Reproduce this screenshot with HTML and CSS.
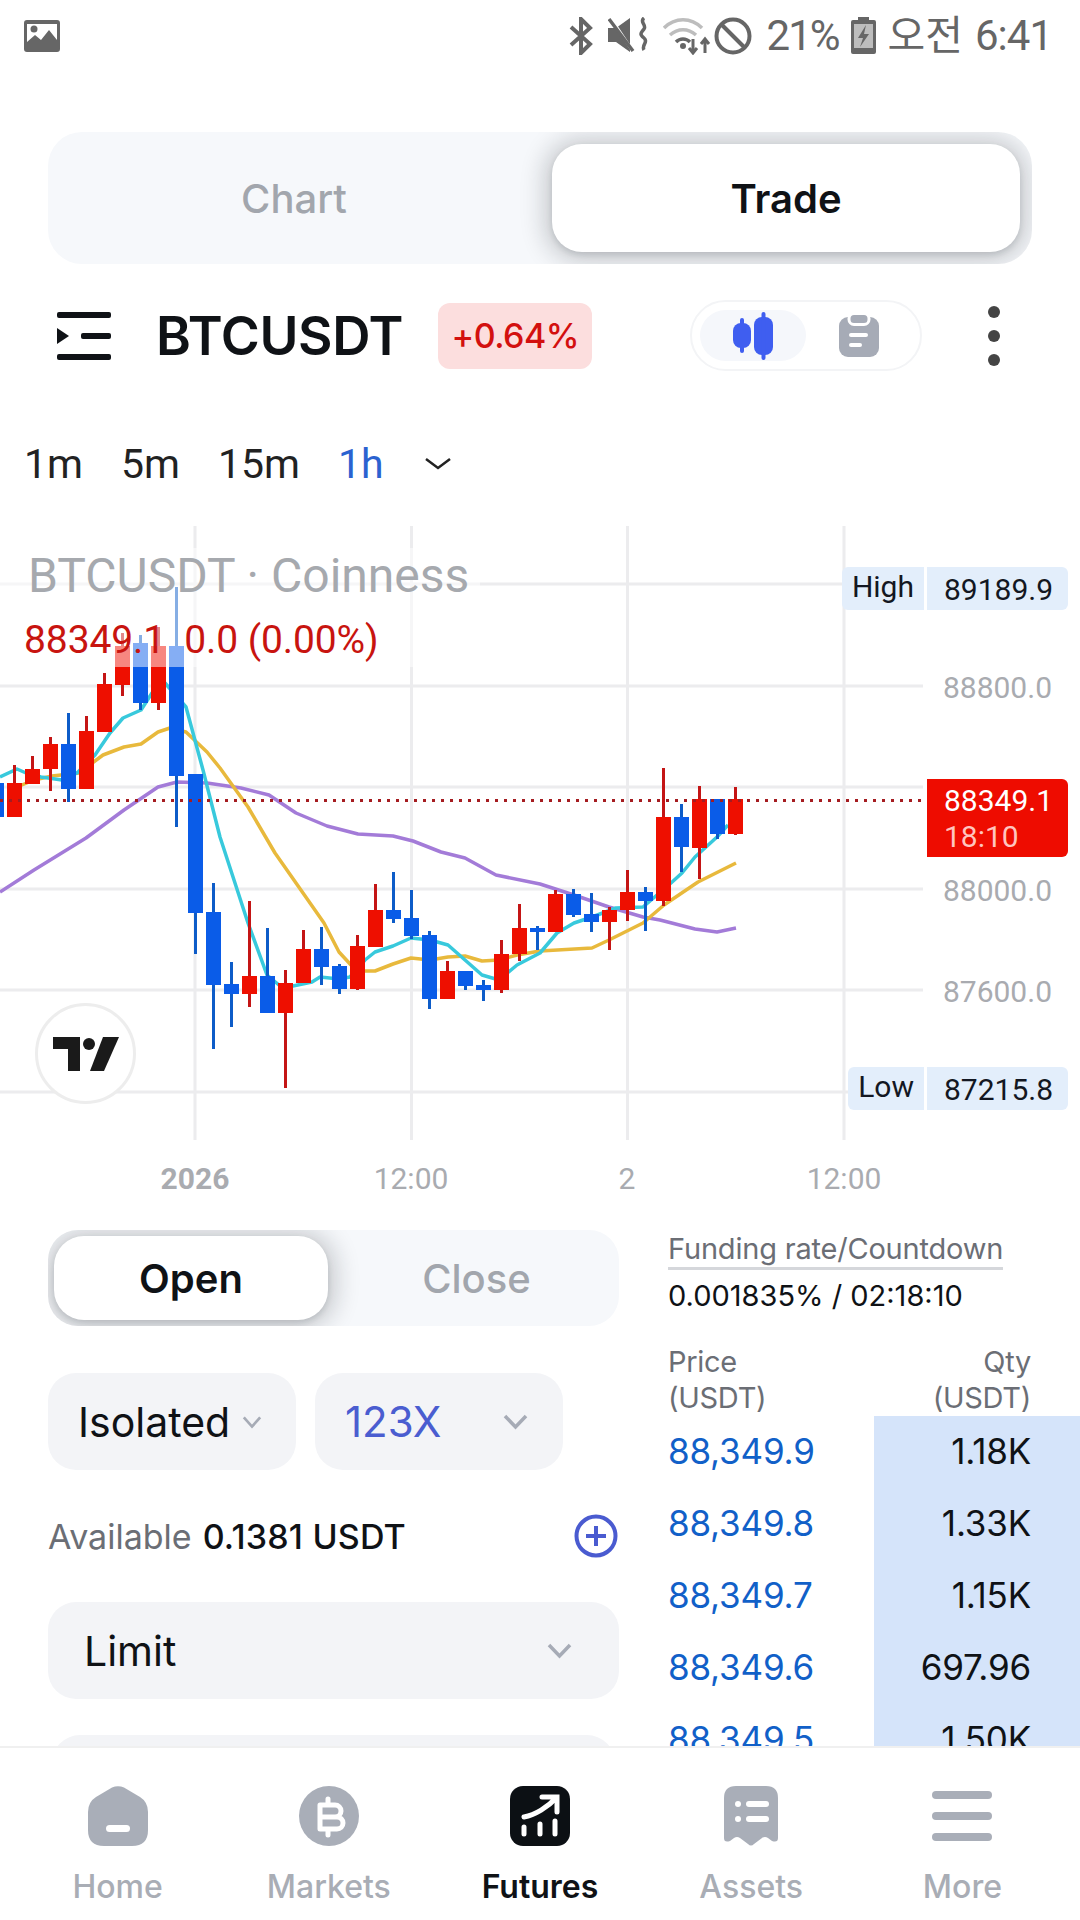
FILE: index.html
```html
<!DOCTYPE html>
<html>
	<head>
		<meta charset="utf-8">
		<title>BTCUSDT</title>
		<link rel="stylesheet" href="styles.css">
	</head>

	<body>
		<div class="page">
			<div class="status">
				<svg class="status-pic" width="36" height="32" viewBox="0 0 36 32">
					<path fill="#666" fill-rule="evenodd" d="M3 0h30a3 3 0 0 1 3 3v26a3 3 0 0 1-3 3H3a3 3 0 0 1-3-3V3a3 3 0 0 1 3-3zM3 4v18l8-7 6 5 8-10 8 10V4z"/>
					<circle cx="10" cy="9" r="3.5" fill="#666"/>
				</svg>
				<div class="status-right">
					<svg width="24" height="38" viewBox="0 0 24 38" fill="none" stroke="#666" stroke-width="4"><path d="M2 10l19 17-9 9V2l9 9L2 28"/></svg>
					<svg class="ml-mute" width="40" height="36" viewBox="0 0 40 36">
						<path fill="#666" d="M0 11h8l14-10v34L8 25H0z"/>
						<path stroke="#fff" stroke-width="3" d="M2 0l24 36"/>
						<path stroke="#666" stroke-width="3.5" d="M1 2l24 32" />
						<path fill="none" stroke="#666" stroke-width="3.5" d="M36 1c-5 4 3 7 0 11s-5 5 0 9-3 7 0 12"/>
					</svg>
					<svg class="ml-wifi" width="48" height="38" viewBox="0 0 48 38" fill="none">
						<path stroke="#bdbdbd" stroke-width="3.5" d="M1 11c11-11 27-11 38 0"/>
						<path stroke="#bdbdbd" stroke-width="3.5" d="M7 18c8-7 18-7 26 0"/>
						<path stroke="#666" stroke-width="3.5" d="M13 25c4-4 10-4 14 0"/>
						<circle cx="20" cy="29" r="3" fill="#666"/>
						<path stroke="#666" stroke-width="3" d="M30 22v14M26 31l4 5 4-5M42 36V22M38 27l4-5 4 5"/>
					</svg>
					<svg class="ml-block" width="38" height="38" viewBox="0 0 38 38" fill="none" stroke="#666" stroke-width="4"><circle cx="19" cy="19" r="16.5"/><path d="M7 7l24 24"/></svg>
					<span class="status-text ml-pct">21%</span>
					<svg class="ml-batt" width="25" height="37" viewBox="0 0 25 37">
						<path fill="#666" d="M7 0h11v3h5a2 2 0 0 1 2 2v30a2 2 0 0 1-2 2H2a2 2 0 0 1-2-2V5a2 2 0 0 1 2-2h5z"/>
						<rect x="3" y="7" width="19" height="24" fill="#bdbdbd"/>
						<path fill="#666" d="M15 8l-8 13h5l-3 9 9-13h-5z"/>
					</svg>
					<span class="status-text status-ko">오전</span>
					<span class="status-text ml-time">6:41</span>
				</div>
			</div>

			<div class="tabs tabs-main">
				<div class="tab tab-big">Chart</div>
				<div class="tab tab-big on">Trade</div>
			</div>

			<div class="symbol-row">
				<svg class="menu-icon" width="54" height="48" viewBox="0 0 54 48" fill="#0f1216">
					<rect width="54" height="6" rx="2"/>
					<rect x="24" y="21" width="30" height="6" rx="2"/>
					<rect y="42" width="54" height="6" rx="2"/>
					<path d="M0 16l12 8-12 8z"/>
				</svg>
				<div class="symbol">BTCUSDT</div>
				<div class="change">+0.64%</div>
				<div class="view-switch">
					<div class="view-btn on">
						<svg width="42" height="48" viewBox="0 0 42 48" fill="#3f5ef0">
							<rect x="1" y="11" width="18" height="25" rx="8"/>
							<rect x="8" y="6" width="4" height="35" rx="2"/>
							<rect x="22" y="5" width="19" height="38" rx="8"/>
							<rect x="29.500" y="0" width="4" height="48" rx="2"/>
						</svg>
					</div>
					<div class="view-btn">
						<svg width="40" height="48" viewBox="0 0 40 48">
							<rect y="5" width="40" height="40" rx="9" fill="#a6abb6"/>
							<rect x="10" y="1.500" width="20" height="11" rx="5" fill="#a6abb6" stroke="#fff" stroke-width="3"/>
							<rect x="10" y="21" width="19" height="4" rx="2" fill="#fff"/>
							<rect x="10" y="31" width="13" height="4" rx="2" fill="#fff"/>
						</svg>
					</div>
				</div>
				<div class="more-dots"><i></i><i></i><i></i></div>
			</div>

			<div class="frames">
				<span>1m</span>
				<span>5m</span>
				<span>15m</span>
				<span class="on">1h</span>
				<svg width="28" height="14" viewBox="0 0 28 14" fill="none" stroke="#222" stroke-width="2.500"><path d="M2 2l12 9 12-9"/></svg>
			</div>

			<div class="chart">
				<svg class="chart-svg" width="1080" height="680" viewBox="0 520 1080 680">
					<!-- grid -->
					<path fill="none" stroke="#ececee" stroke-width="3" d="M0 584H923M0 686H923M0 787H923M0 889H923M0 990H923M0 1092H923M195 526V1140M411.500 526V1140M627.500 526V1140M844 526V1140"/>

					<!-- averages -->
					<g fill="none" stroke-width="3.500" stroke-linejoin="round">
						<polyline stroke="#a37bd8" points="0,892 34,870 86,838 124,810 158,787 177,782 207,783 241,788 269,795 296,813 327,826 358,834 393,836 413,841 441,852 465,858 496,875 540,884 574,895 609,907 643,917 660,920 695,929 717,932 736,928"/>
						<polyline stroke="#e8b93c" points="17,787 34,780 52,776 79,773 103,755 124,747 141,744 158,732 170,728 186,732 207,752 220,768 248,807 275,853 296,883 324,923 339,952 351,965 365,971 375,971 393,964 411,958 430,960 448,957 465,956 482,961 499,960 517,955 540,951 592,948 609,940 643,923 664,905 698,882 736,863"/>
						<polyline stroke="#38c9dc" points="0,777 17,769 26,773 41,777 62,780 77,773 95,755 110,733 123,718 141,710 152,693 165,683 186,707 203,770 220,837 248,923 267,975 279,985 293,986 312,982 320,977 339,979 350,977 365,960 375,952 393,946 411,938 430,940 448,945 465,960 482,975 499,980 517,965 540,953 557,933 574,923 592,917 616,908 643,907 671,883 682,873 695,857 717,837 728,825"/>
					</g>

					<!-- candles -->
					<g fill="none" shape-rendering="crispEdges">
						<path stroke="#c41515" stroke-width="3" d="M14.500 765V817M32.500 756V784M50.500 737V791M86.500 716V731M104.500 673V684M122.500 633V696M158.500 627V710M249.500 901V1007M285.500 970V1088M303.500 930V949M357.500 935V990M375.500 884V910M447.500 961V971M501.500 940V993M519.500 904V961M555.500 890V894M609.500 907V950M627.500 870V921M663.500 768V906M699.500 786V879M735.500 787V835"/>
						<path stroke="#0d5cc8" stroke-width="3" d="M68.500 713V802M140.500 635V710M176.500 587V827M195.500 774V954M213.500 883V1049M231.500 962V1027M267.500 928V1013M321.500 927V985M339.500 964V994M393.500 872V923M411.500 890V939M429.500 931V1009M465.500 971V990M483.500 980V1001M537.500 926V950M573.500 889V917M591.500 893V932M645.500 887V931M681.500 804V872M717.500 799V839"/>
						<path stroke="#ee0f00" stroke-width="15" d="M14.500 783V817M32.500 769V784M50.500 744V769M86.500 731V789M104.500 684V732M122.500 646V685M158.500 646V703M249.500 976V994M285.500 983V1013M303.500 949V983M357.500 946V989M375.500 910V947M447.500 971V999M501.500 954V990M519.500 928V954M555.500 894V932M609.500 910V922M627.500 892V910M663.500 817V901M699.500 799V848M735.500 799V834"/>
						<path stroke="#0a5ce8" stroke-width="15" d="M-3.500 783V817M68.500 744V789M140.500 643V703M176.500 646V776M195.500 774V913M213.500 912V985M231.500 984V994M267.500 976V1013M321.500 949V967M339.500 966V989M393.500 910V919M411.500 918V936M429.500 935V999M465.500 971V986M483.500 985V990M537.500 928V932M573.500 894V915M591.500 914V922M645.500 892V901M681.500 817V847M717.500 799V834"/>
					</g>

					<!-- last price line -->
					<path stroke="#a51c20" stroke-width="3" stroke-dasharray="3 6" d="M0 800.500H923"/>

					<!-- axis labels -->
					<g class="axis-text">
						<text x="1052" y="698" text-anchor="end">88800.0</text>
						<text x="1052" y="901" text-anchor="end">88000.0</text>
						<text x="1052" y="1002" text-anchor="end">87600.0</text>
						<text class="axis-year" x="195" y="1189" text-anchor="middle">2026</text>
						<text x="411" y="1189" text-anchor="middle">12:00</text>
						<text x="627" y="1189" text-anchor="middle">2</text>
						<text x="844" y="1189" text-anchor="middle">12:00</text>
					</g>
				</svg>

				<div class="legend">
					<div class="legend-title">BTCUSDT · Coinness</div>
					<div class="legend-values">88349.1 &nbsp;0.0 (0.00%)</div>
				</div>

				<div class="tag tag-high">
					<span class="tag-name">High</span>
					<span class="tag-value">89189.9</span>
				</div>
				<div class="tag tag-low">
					<span class="tag-name">Low</span>
					<span class="tag-value">87215.8</span>
				</div>
				<div class="price-tag">
					<span>88349.1</span>
					<span class="price-time">18:10</span>
				</div>

				<div class="tv-logo">
					<svg width="66" height="34" viewBox="0 0 66 34" fill="#1a1a1a">
						<path d="M0 0h27v34H15V12H0z"/>
						<circle cx="36" cy="7" r="6"/>
						<path d="M66 0L51 34H37L50 0z"/>
					</svg>
				</div>
			</div>

			<div class="trade">
				<div class="trade-left">
					<div class="tabs tabs-small">
						<div class="tab tab-big on">Open</div>
						<div class="tab tab-big">Close</div>
					</div>

					<div class="select-row">
						<div class="select select-half">
							<span>Isolated</span>
							<svg class="chev" width="20" height="14" viewBox="0 0 22 14" fill="none" stroke="#a6abb6" stroke-width="3"><path d="M2 2l9 10 9-10"/></svg>
						</div>
						<div class="select select-half select-lev">
							<span class="lev">123X</span>
							<svg class="chev" width="25" height="16" viewBox="0 0 25 16" fill="none" stroke="#a6abb6" stroke-width="3.500"><path d="M2 2l10.500 11L23 2"/></svg>
						</div>
					</div>

					<div class="available">
						<span class="available-name">Available</span>
						<span class="available-value">0.1381 USDT</span>
						<svg class="plus" width="44" height="44" viewBox="0 0 44 44" fill="none" stroke="#4a5bd0" stroke-width="4"><circle cx="22" cy="22" r="19.500"/><path d="M22 12v20M12 22h20"/></svg>
					</div>

					<div class="select select-full">
						<span>Limit</span>
						<svg class="chev" width="25" height="16" viewBox="0 0 25 16" fill="none" stroke="#a6abb6" stroke-width="3.500"><path d="M2 2l10.500 11L23 2"/></svg>
					</div>
					<div class="select select-next"></div>
				</div>

				<div class="trade-right">
					<div class="funding-name"><span>Funding rate/Countdown</span></div>
					<div class="funding-value">0.001835% / 02:18:10</div>
					<div class="book-head">
						<span>Price<br>(USDT)</span>
						<span class="book-qty-head">Qty<br>(USDT)</span>
					</div>
					<div class="book">
						<div class="book-row"><span class="book-price">88,349.9</span><span class="book-qty">1.18K</span></div>
						<div class="book-row"><span class="book-price">88,349.8</span><span class="book-qty">1.33K</span></div>
						<div class="book-row"><span class="book-price">88,349.7</span><span class="book-qty">1.15K</span></div>
						<div class="book-row"><span class="book-price">88,349.6</span><span class="book-qty">697.96</span></div>
						<div class="book-row"><span class="book-price">88,349.5</span><span class="book-qty">1.50K</span></div>
					</div>
				</div>
			</div>

			<div class="nav">
				<div class="nav-item">
					<svg width="60" height="60" viewBox="0 0 60 60">
						<path fill="#a9aeb8" d="M24 1.500Q30-1 36 1.500L52 11Q60 16 60 26V44Q60 60 44 60H16Q0 60 0 44V26Q0 16 8 11Z"/>
						<rect x="18" y="39" width="24" height="7" rx="3.500" fill="#fff"/>
					</svg>
					<span>Home</span>
				</div>
				<div class="nav-item">
					<svg width="60" height="60" viewBox="0 0 60 60">
						<circle cx="30" cy="30" r="30" fill="#a9aeb8"/>
						<path fill="none" stroke="#fff" stroke-width="5" stroke-linecap="round" stroke-linejoin="round" d="M21 19h15a6 6 0 0 1 0 12H21h17a6 6 0 0 1 0 12H21zM29 13v6M29 43v6"/>
					</svg>
					<span>Markets</span>
				</div>
				<div class="nav-item on">
					<svg width="60" height="60" viewBox="0 0 60 60">
						<rect width="60" height="60" rx="13" fill="#0c1014"/>
						<path fill="none" stroke="#fff" stroke-width="5" stroke-linecap="round" d="M14 31c11-2 24-10 32-19M32 11h15v15"/>
						<path stroke="#fff" stroke-width="5" stroke-linecap="round" d="M14 41v7M30 38v10M45 35v13"/>
					</svg>
					<span>Futures</span>
				</div>
				<div class="nav-item">
					<svg width="54" height="60" viewBox="0 0 54 60">
						<path fill="#a9aeb8" d="M12 0H42Q54 0 54 12V52Q54 57 48 55L44 52Q41 50 38 52L30 58Q27 61 24 58L16 52Q13 50 10 52L6 55Q0 57 0 52V12Q0 0 12 0Z"/>
						<circle cx="14" cy="18" r="3" fill="#fff"/>
						<circle cx="14" cy="33" r="3" fill="#fff"/>
						<rect x="22" y="15" width="23" height="6" rx="3" fill="#fff"/>
						<rect x="22" y="30" width="23" height="6" rx="3" fill="#fff"/>
					</svg>
					<span>Assets</span>
				</div>
				<div class="nav-item">
					<svg width="60" height="60" viewBox="0 0 60 60" fill="#a9aeb8">
						<rect y="5" width="60" height="8" rx="4"/>
						<rect y="26" width="60" height="8" rx="4"/>
						<rect y="47" width="60" height="8" rx="4"/>
					</svg>
					<span>More</span>
				</div>
			</div>
		</div>
	</body>
</html>
```

FILE: styles.css
```css
* {
	margin: 0;
	padding: 0;
	box-sizing: border-box;
}
body {
	background-color: #fff;
	font-family: Inter, "Noto Sans CJK KR", sans-serif;
	color: #0f1216;
}
.page {
	width: 1080px;
	height: 1920px;
	display: flex;
	flex-direction: column;
	overflow: hidden;
}

/* status bar */
.status {
	height: 70px;
	padding: 17px 28px 0 24px;
	display: flex;
	justify-content: space-between;
	align-items: flex-start;
}
.status-pic {
	margin-top: 3px;
}
.status-right {
	display: flex;
	align-items: flex-start;
}
.status-text {
	font-family: Roboto, "Noto Sans CJK KR", sans-serif;
	font-size: 42px;
	line-height: 38px;
	color: #666;
	letter-spacing: -2px;
}
.status-ko {
	font-size: 41px;
	letter-spacing: 0;
	margin-left: 12px;
}
.ml-mute { margin-left: 15px; }
.ml-wifi { margin-left: 15px; }
.ml-block { margin-left: 3px; }
.ml-pct { margin-left: 15px; }
.ml-batt { margin-left: 12px; }
.ml-time { margin-left: 12px; letter-spacing: -1px; }

/* tabs */
.tabs {
	display: flex;
	background-color: #f6f8fb;
	overflow: hidden;
}
.tabs-main {
	height: 132px;
	margin: 62px 48px 0;
	padding: 12px;
	border-radius: 34px;
}
.tabs-small {
	height: 96px;
	padding: 6px;
	border-radius: 30px;
}
.tab {
	display: flex;
	align-items: center;
	justify-content: center;
	color: #a2a6ad;
	border-radius: 30px;
}
.tab-big {
	font-size: 40px;
	font-weight: 500;
}
.tabs-main .tab {
	flex: 1;
}
.tabs-main .tab:first-child {
	flex: 0 0 492px;
	padding-right: 24px;
}
.tabs-small .tab {
	flex: 0 0 274px;
}
.tabs-small .tab:last-child {
	flex: 1;
	padding-left: 12px;
}
.tab.on {
	background-color: #fff;
	color: #0f1216;
	font-weight: 600;
	box-shadow: 0 2px 24px 8px rgba(20, 24, 30, .2), 0 3px 6px rgba(20, 24, 30, .12);
}

/* symbol row */
.symbol-row {
	height: 71px;
	margin-top: 36px;
	padding-left: 57px;
	display: flex;
	align-items: center;
}
.menu-icon {
	margin-top: 1px;
}
.symbol {
	margin-left: 45px;
	font-size: 53px;
	font-weight: 600;
	letter-spacing: -.3px;
}
.change {
	width: 154px;
	height: 66px;
	margin-left: 35px;
	background-color: #fcdede;
	border-radius: 12px;
	color: #d3100f;
	font-size: 34px;
	font-weight: 500;
	letter-spacing: -.5px;
	display: flex;
	align-items: center;
	justify-content: center;
}
.view-switch {
	width: 232px;
	height: 71px;
	margin-left: 98px;
	padding: 8px 0 8px 8px;
	border: 2px solid #f3f4f6;
	border-radius: 36px;
	display: flex;
}
.view-btn {
	width: 106px;
	border-radius: 26px;
	display: flex;
	align-items: center;
	justify-content: center;
}
.view-btn.on {
	background-color: #f5f7fb;
}
.more-dots {
	margin-left: 66px;
	display: flex;
	flex-direction: column;
	gap: 12px;
}
.more-dots i {
	display: block;
	width: 12px;
	height: 12px;
	border-radius: 50%;
	background-color: #444;
}

/* time frames */
.frames {
	height: 50px;
	margin-top: 68px;
	padding-left: 24px;
	display: flex;
	align-items: center;
	font-family: Roboto, sans-serif;
	font-size: 41px;
	color: #222;
}
.frames span {
	margin-right: 38px;
}
.frames .on {
	color: #2b62d0;
	margin-right: 40px;
}

/* chart */
.chart {
	position: relative;
	height: 680px;
	margin-top: 31px;
	font-family: Roboto, sans-serif;
}
.chart-svg {
	display: block;
}
.axis-text {
	font-size: 30px;
	fill: #a9abb0;
}
.axis-year {
	font-weight: 700;
}
.legend {
	position: absolute;
	top: 28px;
	left: 0;
	width: 480px;
	height: 119px;
	padding-left: 28px;
	background-color: rgba(255, 255, 255, .5);
	white-space: nowrap;
}
.legend-title {
	font-size: 48px;
	line-height: 56px;
	color: #a6a9ae;
}
.legend-values {
	margin-top: 14px;
	margin-left: -4px;
	font-size: 39px;
	line-height: 44px;
	letter-spacing: -.1px;
	color: #c8140f;
}
.tag {
	position: absolute;
	right: 12px;
	height: 43px;
	display: flex;
	font-size: 30px;
	color: #131722;
}
.tag-high {
	top: 47px;
}
.tag-low {
	top: 547px;
}
.tag-name {
	background-color: #e3eefb;
	border-radius: 6px 0 0 6px;
	padding: 0 10px;
	line-height: 40px;
}
.tag-value {
	width: 141px;
	margin-left: 3px;
	padding-left: 17px;
	background-color: #e3eefb;
	border-radius: 0 6px 6px 0;
	line-height: 45px;
}
.price-tag {
	position: absolute;
	top: 259px;
	right: 12px;
	width: 141px;
	height: 78px;
	padding: 4px 0 0 17px;
	background-color: #ee0c00;
	border-radius: 0 6px 6px 0;
	color: #fff;
	font-size: 30px;
	line-height: 36px;
	display: flex;
	flex-direction: column;
}
.price-time {
	color: #ffc4bf;
}
.tv-logo {
	position: absolute;
	top: 483px;
	left: 35px;
	width: 101px;
	height: 101px;
	background-color: #fff;
	border: 3px solid #ededed;
	border-radius: 50%;
	display: flex;
	align-items: center;
	justify-content: center;
}

/* trade panel */
.trade {
	height: 516px;
	margin-top: 30px;
	padding-left: 48px;
	display: flex;
	overflow: hidden;
}
.trade-left {
	width: 571px;
	flex-shrink: 0;
}
.select-row {
	margin-top: 47px;
	display: flex;
	gap: 19px;
}
.select {
	height: 97px;
	background-color: #f3f4f7;
	border-radius: 28px;
	display: flex;
	align-items: center;
	justify-content: space-between;
	font-size: 41px;
}
.select-half {
	width: 248px;
	padding: 0 34px 0 30px;
}
.select-lev {
	padding-right: 35px;
}
.lev {
	color: #4a5dd0;
	font-size: 42px;
}
.available {
	height: 132px;
	display: flex;
	align-items: center;
	font-size: 34px;
}
.available-name {
	color: #6b6e75;
}
.available-value {
	margin-left: 11px;
	font-weight: 500;
	letter-spacing: .2px;
}
.plus {
	margin-left: auto;
	margin-right: 1px;
}
.select-full {
	padding: 0 47px 0 36px;
}
.select-next {
	margin: 36px 4px 0;
}
.trade-right {
	flex: 1;
	margin-left: 49px;
}
.funding-name {
	padding-top: 1px;
	font-size: 29px;
	line-height: 36px;
	color: #6b6e75;
}
.funding-name span {
	display: inline-block;
	border-bottom: 3px solid #d5d7db;
	letter-spacing: -.2px;
}
.funding-value {
	margin-top: 7px;
	font-size: 29px;
	line-height: 38px;
}
.book-head {
	margin-top: 29px;
	padding-right: 49px;
	display: flex;
	justify-content: space-between;
	font-size: 29px;
	line-height: 36px;
	letter-spacing: -.3px;
	color: #6b6e75;
}
.book-qty-head {
	text-align: right;
}
.book {
	position: relative;
}
.book::before {
	content: "";
	position: absolute;
	top: 0;
	right: 0;
	width: 206px;
	height: 400px;
	background-color: #d5e4fa;
}
.book-row {
	position: relative;
	height: 72px;
	padding: 0 49px 3px 0;
	display: flex;
	align-items: center;
	justify-content: space-between;
	font-size: 35px;
	letter-spacing: -.2px;
}
.book-price {
	color: #1160c8;
}

/* bottom nav */
.nav {
	position: relative;
	height: 174px;
	padding: 38px 12px 0;
	background-color: #fff;
	border-top: 2px solid #f0f0f0;
	display: grid;
	grid-template-columns: repeat(5, 1fr);
}
.nav-item {
	display: flex;
	flex-direction: column;
	align-items: center;
	font-size: 32px;
	font-weight: 500;
	color: #a9adb5;
}
.nav-item span {
	margin-top: 21px;
}
.nav-item.on {
	color: #0f1216;
	font-weight: 600;
}
```
